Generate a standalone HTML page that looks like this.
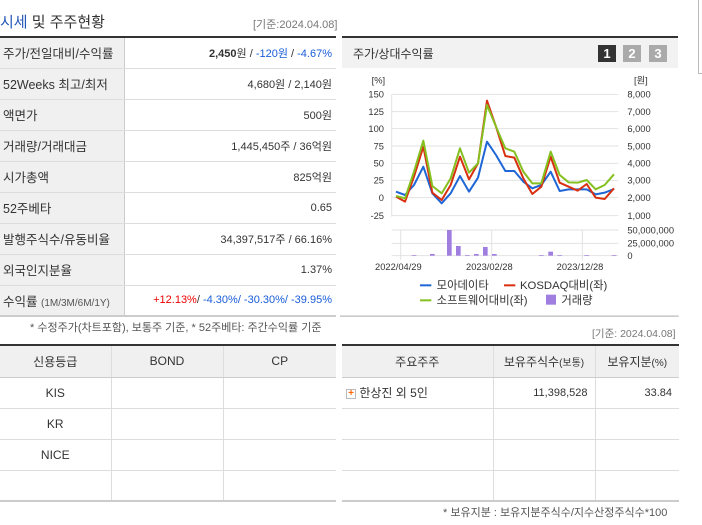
<!DOCTYPE html>
<html><head><meta charset="utf-8"><style>
*{margin:0;padding:0;box-sizing:border-box}
body{width:702px;height:525px;background:#fff;font-family:"Liberation Sans","Noto Sans CJK KR",sans-serif;color:#333;position:relative;overflow:hidden}
.abs{position:absolute}
table{border-collapse:collapse}
.lt{position:absolute;left:0;top:36px;width:336px;border-top:2px solid #333}
.lt td{height:31px;border-bottom:1px solid #ddd;font-size:12px}
.lt td.l{width:124px;background:#f0f0f0;border-right:1px solid #ccc;padding-left:3px;font-size:12.5px}
.lt td.v{text-align:right;padding-right:4px;font-size:11px}
.lt tr:last-child td{border-bottom:2px solid #ccc}
.bt{position:absolute;top:344px;border-top:2px solid #333}
.bt td{height:31px;border-bottom:1px solid #ddd;border-right:1px solid #ddd;font-size:12px;text-align:center}
.bt tr:first-child td{background:#f0f0f0;height:32px;border-bottom:1px solid #ccc}
.bt td:last-child{border-right:none}
.bt tr:last-child td{border-bottom:2px solid #ccc}
.blue{color:#1a5dd8}.red{color:#e00}
</style></head><body>
<div class="abs" style="left:0;top:11px;font-size:15px;color:#333"><span style="color:#2456b8">시세</span> 및 주주현황</div>
<div class="abs" style="left:253px;top:16px;font-size:11px;color:#777">[기준:2024.04.08]</div>
<table class="lt">
<tr><td class="l">주가/전일대비/수익률</td><td class="v"><b>2,450</b>원 / <span class="blue">-120원</span> / <span class="blue">-4.67%</span></td></tr>
<tr><td class="l">52Weeks 최고/최저</td><td class="v">4,680원 / 2,140원</td></tr>
<tr><td class="l">액면가</td><td class="v">500원</td></tr>
<tr><td class="l">거래량/거래대금</td><td class="v">1,445,450주 / 36억원</td></tr>
<tr><td class="l">시가총액</td><td class="v">825억원</td></tr>
<tr><td class="l">52주베타</td><td class="v">0.65</td></tr>
<tr><td class="l">발행주식수/유동비율</td><td class="v">34,397,517주 / 66.16%</td></tr>
<tr><td class="l">외국인지분율</td><td class="v">1.37%</td></tr>
<tr><td class="l">수익률 <span style="font-size:10px;color:#555">(1M/3M/6M/1Y)</span></td><td class="v"><span class="red">+12.13%</span>/ <span class="blue">-4.30%/ -30.30%/ -39.95%</span></td></tr>
</table>
<div class="abs" style="left:30px;top:319px;font-size:11px;color:#555">* 수정주가(차트포함), 보통주 기준, * 52주베타: 주간수익률 기준</div>
<div class="abs" style="left:592px;top:326px;font-size:10.5px;color:#777">[기준: 2024.04.08]</div>
<div class="abs" style="left:342px;top:36px;width:336px;height:2px;background:#333"></div>
<div class="abs" style="left:342px;top:38px;width:336px;height:30px;background:#f2f2f2"></div>
<div class="abs" style="left:353px;top:45px;font-size:12px">주가/상대수익률</div>
<div class="abs" style="left:598px;top:45px;width:18px;height:17px;background:#333;color:#fff;font-weight:bold;font-size:13px;text-align:center;line-height:17px">1</div>
<div class="abs" style="left:623px;top:45px;width:18px;height:17px;background:#aaa;color:#fff;font-weight:bold;font-size:13px;text-align:center;line-height:17px">2</div>
<div class="abs" style="left:649px;top:45px;width:18px;height:17px;background:#aaa;color:#fff;font-weight:bold;font-size:13px;text-align:center;line-height:17px">3</div>
<div class="abs" style="left:698px;top:0;width:1px;height:74px;background:#bbb"></div>
<div class="abs" style="left:698px;top:73px;width:4px;height:1px;background:#bbb"></div>
<svg class="abs" style="left:340px;top:30px" width="362" height="290" viewBox="0 0 1086 870">
<g stroke="#e2e2e2" stroke-width="3">
<line x1="155" x2="835" y1="193" y2="193"/><line x1="155" x2="835" y1="245" y2="245"/><line x1="155" x2="835" y1="296" y2="296"/><line x1="155" x2="835" y1="348" y2="348"/><line x1="155" x2="835" y1="400" y2="400"/><line x1="155" x2="835" y1="451" y2="451"/><line x1="155" x2="835" y1="503" y2="503"/><line x1="155" x2="835" y1="557" y2="557"/>
<line x1="155" x2="835" y1="600" y2="600"/><line x1="155" x2="835" y1="640" y2="640"/><line x1="155" x2="835" y1="677" y2="677"/>
<line x1="155" x2="155" y1="193" y2="560"/>
<line x1="182" x2="182" y1="600" y2="690"/><line x1="455" x2="455" y1="600" y2="690"/><line x1="727" x2="727" y1="600" y2="690"/>
</g>
<g fill="#a07ee0">
<rect x="321" y="600" width="14" height="77"/><rect x="348" y="648" width="14" height="29"/><rect x="429" y="651" width="14" height="26"/><rect x="215" y="675" width="14" height="2"/><rect x="270" y="672" width="14" height="5"/><rect x="375" y="675" width="14" height="2"/><rect x="402" y="672" width="14" height="5"/><rect x="456" y="672" width="14" height="5"/><rect x="597" y="675" width="14" height="2"/><rect x="625" y="665" width="14" height="12"/><rect x="652" y="675" width="14" height="2"/><rect x="733" y="675" width="14" height="2"/><rect x="815" y="675" width="14" height="2"/>
</g>
<g fill="none" stroke-width="6" stroke-linejoin="round">
<polyline stroke="#1f66d6" points="168,485 195,495 222,465 250,410 277,490 305,520 332,490 360,438 387,485 414,443 441,335 468,375 496,423 523,423 550,455 577,475 604,465 632,425 659,483 686,478 713,478 740,478 767,493 794,488 822,477"/>
<polyline stroke="#d83010" points="168,500 195,515 222,440 250,350 277,488 305,510 332,465 360,380 387,448 414,400 441,212 468,290 496,378 523,383 550,445 577,492 604,470 632,380 659,458 686,470 713,482 740,462 767,503 794,507 822,475"/>
<polyline stroke="#84c020" points="168,498 195,505 222,425 250,332 277,468 305,490 332,445 360,355 387,428 414,400 441,225 468,290 496,355 523,365 550,425 577,460 604,460 632,365 659,435 686,457 713,458 740,450 767,478 794,465 822,433"/>
</g>
<g font-size="28" fill="#333" font-family="Liberation Sans,sans-serif">
<text x="95" y="160">[%]</text><text x="882" y="160">[원]</text>
<g text-anchor="end"><text x="132" y="203">150</text><text x="132" y="255">125</text><text x="132" y="306">100</text><text x="132" y="358">75</text><text x="132" y="410">50</text><text x="132" y="461">25</text><text x="132" y="513">0</text><text x="132" y="567">-25</text></g>
<text x="862" y="203">8,000</text><text x="862" y="255">7,000</text><text x="862" y="306">6,000</text><text x="862" y="358">5,000</text><text x="862" y="410">4,000</text><text x="862" y="461">3,000</text><text x="862" y="513">2,000</text><text x="862" y="567">1,000</text>
<text x="862" y="610">50,000,000</text><text x="862" y="650">25,000,000</text><text x="862" y="687">0</text>
<text x="105" y="720">2022/04/29</text><text x="378" y="720">2023/02/28</text><text x="650" y="720">2023/12/28</text>
</g>
<g font-size="34" fill="#333" font-family="Liberation Sans,Noto Sans CJK KR,sans-serif">
<rect x="240" y="763" width="34" height="6" fill="#1f66d6"/><text x="290" y="777">모아데이타</text>
<rect x="492" y="763" width="34" height="6" fill="#d83010"/><text x="540" y="777">KOSDAQ대비(좌)</text>
<rect x="240" y="808" width="34" height="6" fill="#84c020"/><text x="290" y="822">소프트웨어대비(좌)</text>
<rect x="618" y="794" width="30" height="30" fill="#a07ee0"/><text x="664" y="822">거래량</text>
</g>
<rect x="0" y="856" width="1016" height="5" fill="#ccc"/>
</svg>
<table class="bt" style="left:0;width:336px">
<tr><td style="width:111px">신용등급</td><td style="width:112px">BOND</td><td>CP</td></tr>
<tr><td>KIS</td><td></td><td></td></tr>
<tr><td>KR</td><td></td><td></td></tr>
<tr><td>NICE</td><td></td><td></td></tr>
<tr><td></td><td></td><td></td></tr>
</table>
<table class="bt" style="left:342px;width:337px">
<tr><td style="width:151px">주요주주</td><td style="width:102px">보유주식수<span style="font-size:10px">(보통)</span></td><td>보유지분<span style="font-size:10px">(%)</span></td></tr>
<tr><td style="text-align:left;padding-left:4px"><span style="display:inline-block;width:10px;height:10px;border:1px solid #bbb;color:#f60;font-size:10px;line-height:8px;text-align:center;vertical-align:middle;font-weight:bold">+</span> 한상진 외 5인</td><td style="text-align:right;padding-right:7px;font-size:11px">11,398,528</td><td style="text-align:right;padding-right:7px;font-size:11px">33.84</td></tr>
<tr><td></td><td></td><td></td></tr>
<tr><td></td><td></td><td></td></tr>
<tr><td></td><td></td><td></td></tr>
</table>
<div class="abs" style="left:443px;top:504px;font-size:11px;color:#555">* 보유지분 : 보유지분주식수/지수산정주식수*100</div>
</body></html>
